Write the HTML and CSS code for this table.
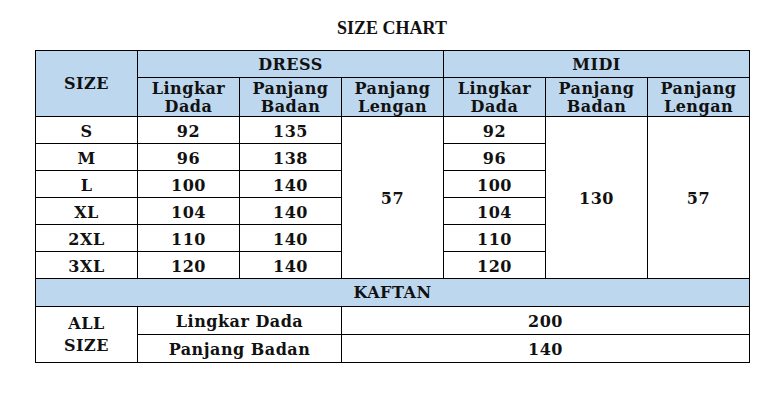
FILE: index.html
```html
<!DOCTYPE html>
<html>
<head>
<meta charset="utf-8">
<link rel="stylesheet" href="styles.css">
</head>
<body>
<div class="page">
  <h1 class="title">SIZE CHART</h1>
  <table class="chart">
    <colgroup>
      <col class="c"><col class="c"><col class="c"><col class="c"><col class="c"><col class="c"><col class="c">
    </colgroup>
    <tr class="r-group">
      <th class="hd" rowspan="2">SIZE</th>
      <th class="hd" colspan="3">DRESS</th>
      <th class="hd" colspan="3">MIDI</th>
    </tr>
    <tr class="r-sub">
      <th class="hd">Lingkar<br>Dada</th>
      <th class="hd">Panjang<br>Badan</th>
      <th class="hd">Panjang<br>Lengan</th>
      <th class="hd">Lingkar<br>Dada</th>
      <th class="hd">Panjang<br>Badan</th>
      <th class="hd">Panjang<br>Lengan</th>
    </tr>
    <tr class="r-data"><td>S</td><td>92</td><td>135</td><td rowspan="6">57</td><td>92</td><td rowspan="6">130</td><td rowspan="6">57</td></tr>
    <tr class="r-data"><td>M</td><td>96</td><td>138</td><td>96</td></tr>
    <tr class="r-data"><td>L</td><td>100</td><td>140</td><td>100</td></tr>
    <tr class="r-data"><td>XL</td><td>104</td><td>140</td><td>104</td></tr>
    <tr class="r-data"><td>2XL</td><td>110</td><td>140</td><td>110</td></tr>
    <tr class="r-data"><td>3XL</td><td>120</td><td>140</td><td>120</td></tr>
    <tr class="r-kaftan"><th class="hd" colspan="7">KAFTAN</th></tr>
    <tr class="r-k"><td rowspan="2" class="all">ALL<br>SIZE</td><td colspan="2">Lingkar Dada</td><td colspan="4">200</td></tr>
    <tr class="r-k"><td colspan="2">Panjang Badan</td><td colspan="4">140</td></tr>
  </table>
</div>
</body>
</html>
```
FILE: styles.css
```css
html, body {
  margin: 0;
  padding: 0;
  background: #ffffff;
}
.page {
  width: 783px;
  padding-top: 18px;
}
.title {
  margin: 0 0 12px 0;
  font-family: "Liberation Serif", serif;
  font-weight: bold;
  font-size: 18px;
  line-height: 20px;
  text-align: center;
  color: #111;
  padding-left: 1px;
}
.chart {
  margin-left: 35px;
  width: 715px;
  border-collapse: collapse;
  table-layout: fixed;
  font-family: "DejaVu Serif", serif;
  font-weight: bold;
  font-size: 16px;
  letter-spacing: 0.5px;
  color: #111;
}
.chart td, .chart th {
  border: 1px solid #000;
  text-align: center;
  vertical-align: middle;
  padding: 0;
  font-weight: bold;
}
.hd {
  background: #bdd7ee;
}
.r-group { height: 27px; }
.r-sub { height: 39px; }
.r-sub th { line-height: 18px; padding-top: 1px; }
.r-data { height: 27px; }
.r-data td { padding-top: 2px; }
.r-kaftan { height: 28px; }
.r-k { height: 28px; }
.r-k td { padding-top: 1px; }
.all { line-height: 22px; }
```
